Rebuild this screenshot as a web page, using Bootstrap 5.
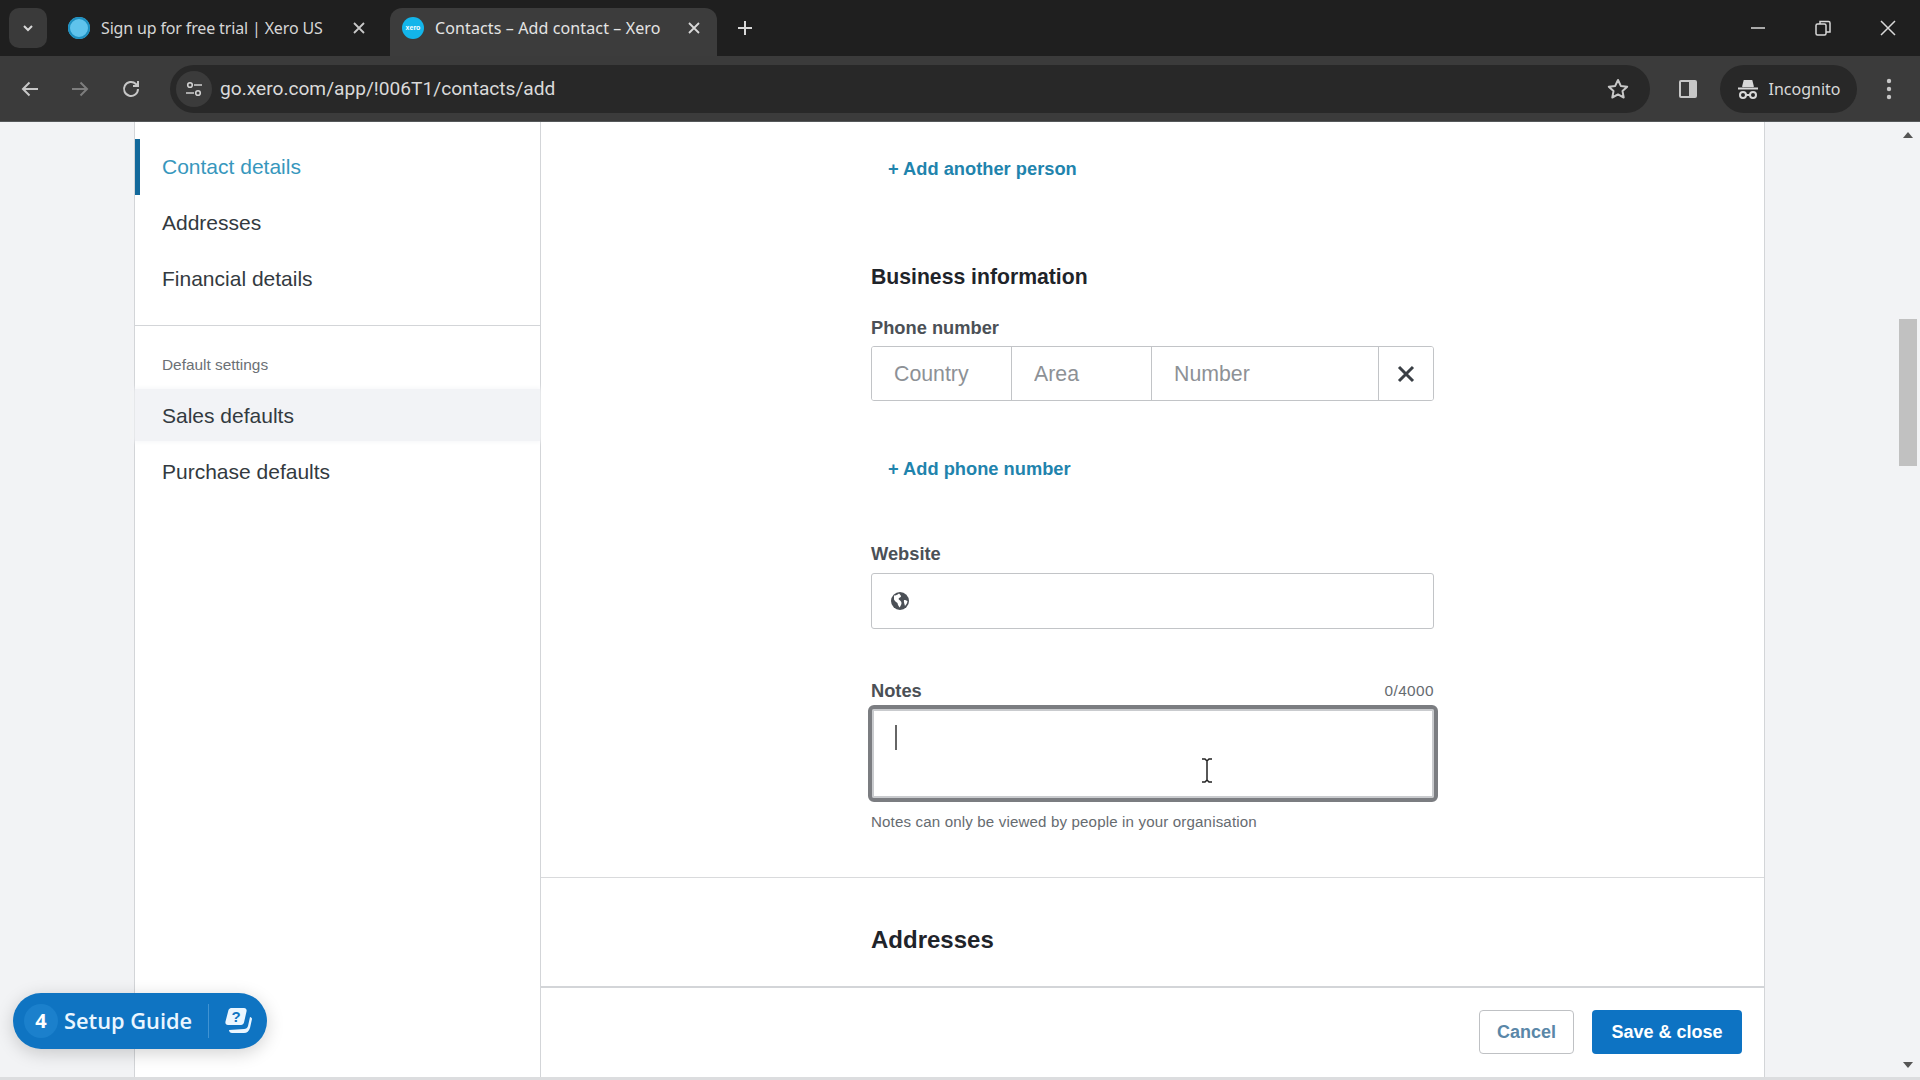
<!DOCTYPE html>
<html lang="en">
<head>
<meta charset="utf-8">
<title>Contacts – Add contact – Xero</title>
<link href="https://cdn.jsdelivr.net/npm/bootstrap@5.3.0/dist/css/bootstrap.min.css" rel="stylesheet">
<style>
html,body{height:100%;overflow:hidden}
body{font-family:"Liberation Sans",Arial,sans-serif;background:#f2f3f5;color:#2b3036}
.shell{height:1080px;width:1920px}
.tabstrip{height:56px;background:#1f1f1f;color:#d6d6d6;font-family:"Noto Sans",sans-serif;font-size:16px}
.tabmenu{width:38px;height:40px;margin:8px 0 0 9px;background:#3a3a3a;border-radius:10px}
.chrometab{height:48px;margin-top:8px;padding:0 16px 8px 12px;width:327px;border-radius:12px 12px 0 0}
.chrometab.current{background:#3c3c3c;color:#e4e4e4;padding-right:16px}
.chrometab.current .tabname{letter-spacing:.12px}
.chrometab.other{margin-left:9px;width:334px;padding-right:24px}
.favi{width:22px;height:22px;border-radius:50%;background:#13b5ea;flex:none;color:#fff;font-size:7px;font-weight:700;line-height:22px;text-align:center;font-family:"Liberation Sans",sans-serif}
.favi.blank{background:#5fc3ec;box-shadow:inset 0 0 0 2px #1d8fc0}
.tabname{flex:1;white-space:nowrap;overflow:hidden;margin-left:11px;letter-spacing:-.15px}
.plusslot{height:56px;margin-left:20px}
.winctrls{height:56px;gap:47px;padding-right:23px}
.toolbar{height:66px;background:#3b3b3b;padding:9px 0;color:#c7c7c7;border-bottom:1px solid #55585a}
.navgap{width:170px;flex:none;padding-left:20px;gap:30px}
.omnibox{flex:none;width:1480px;background:#282828;height:48px;border-radius:24px;padding:0 20px 0 6px;font-family:Roboto,sans-serif;font-size:19.15px;color:#dadada}
.urltext{padding-top:1px}
.sitechip{width:36px;height:36px;border-radius:50%;background:#3b3b3b;flex:none;margin-right:8px}
.panelicon{margin-left:28px;flex:none}
.profilechip{background:#282828;border-radius:24px;width:137px;height:48px;margin:0 29px 0 22px;flex:none;font-family:"Noto Sans",sans-serif;font-size:16px;color:#d8d8d8;gap:10px}
.workspace{height:958px}
.leftgutter{width:134px;flex:none;background:#f2f3f5}
.sidenav{width:407px;flex:none;background:#fff;border-left:1px solid #d3d5d8;border-right:1px solid #d3d5d8}
.sidelink{display:block;height:56px;line-height:56px;padding-left:27px;font-size:21px;color:#333a40;text-decoration:none}
.sidelink.chosen{color:#3797bd;border-left:5px solid #13699b;padding-left:22px}
.sidelink.hovered{background:#f2f3f6;height:52px;line-height:54px;margin-bottom:3px;box-shadow:0 0 5px 1px #f5f6f8}
.sidelabel{font-size:15.4px;color:#6b7075;padding:0 0 0 27px;line-height:20px;margin:29px 0 14px}
.sidelist{padding-top:17px;padding-bottom:18px;border-bottom:1px solid #d3d5d8}
.maincol{width:1224px;flex:none;background:#fff;border-right:1px solid #d3d5d8}
.scroller{flex:1;overflow:hidden}
.formcol{width:563px;margin-left:330px}
.addlink{display:block;font-weight:700;font-size:18.3px;color:#1f84ad;text-decoration:none;padding-left:17px;line-height:24px}
.sectiontitle{font-weight:700;font-size:21.2px;color:#1f242a;line-height:26px}
.fieldlabel{font-weight:700;font-size:18.3px;color:#4b5056;line-height:22px;margin:0}
.fieldbox{border:1.5px solid #c2c4c7;border-radius:3px}
.phonegroup{height:55px}
.phonegroup .form-control{border:0;border-right:1.5px solid #c2c4c7;border-radius:0;font-size:21.3px;color:#333;padding:1px 0 0 22px;height:100%;flex:none;box-shadow:none}
.phonegroup .form-control::placeholder{color:#8d9196}
.clearbtn{flex:1;background:#fff;border:0;padding:0}
.sitebox{height:56px;padding-left:18px;background:#fff}
.sitebox .form-control{border:0;height:100%;box-shadow:none}
.noteshead{margin-top:51px;margin-bottom:3px}
.notesbox{width:570px;margin-left:-3.5px;height:97px;border:4px solid #7b7d81;border-radius:6px;background:#fff;padding:2px;box-shadow:inset 0 0 0 2px #c9cbce;position:relative}
.counter{font-size:15.4px;color:#666b70;letter-spacing:.4px;line-height:22px}
.hintline{font-size:15.1px;color:#666b70;line-height:20px;letter-spacing:.15px;margin-top:10px}
.caretbar{position:absolute;left:23px;top:16px;width:2px;height:25px;background:#666}
.ibeam{position:absolute;left:329px;top:49px}
.rule{height:1px;background:#d9dadc;margin:45px 0 0}
.addrtitle{font-weight:700;font-size:24px;color:#1f242a;line-height:30px;margin:47px 0 0 330px}
.footerbar{height:94px;border-top:2px solid #d3d5d8;padding:0 22px 4px 0;gap:18px;background:#fff;flex:none}
.footerbar .btn{height:44px;font-weight:700;font-size:18px;padding:0;border-radius:4px}
.btn-cancel{width:95px;background:#fff;border:1.5px solid #bfc1c4;color:#5a87a8}
.btn-savex{width:150px;background:#0d73c3;border:0;color:#fff}
.rightgutter{flex:1;background:#f2f3f5}
.vscroll{width:21px;flex:none;background:#f2f3f5;position:relative}
.vthumb{width:18px;height:147px;background:#c1c1c1;margin-top:197px}
.arrowup{position:absolute;left:0;top:5px}
.arrowdown{position:absolute;left:0;bottom:6px}
.setupguide{position:absolute;left:13px;top:993px;width:254px;height:56px;border-radius:28px;background:#0f74c2;color:#eaf6ff;font-family:"Open Sans",sans-serif;font-size:21.8px;font-weight:600;box-shadow:0 4px 18px rgba(0,0,0,.18);z-index:5}
.guidecount{width:34px;height:34px;border-radius:50%;background:#1b80cc;font-weight:700;font-size:20px;line-height:34px;text-align:center;margin-left:11px;margin-right:6px;color:#fff;flex:none}
.guidesep{width:1px;height:34px;background:#3f93d3;margin:0 15px 0 16px}
.pagefoot{position:absolute;left:0;top:1077px;width:1920px;height:3px;background:#dcdddf}
</style>
</head>
<body>
<div class="shell d-flex flex-column position-relative">
  <div class="tabstrip d-flex align-items-start">
    <div class="tabmenu d-flex align-items-center justify-content-center">
      <svg width="14" height="14" viewBox="0 0 14 14" fill="none" stroke="#d8d8d8" stroke-width="2"><path d="M3 5l4 4 4-4"/></svg>
    </div>
    <div class="chrometab other d-flex align-items-center">
      <span class="favi blank"></span><span class="tabname">Sign up for free trial | Xero US</span>
      <svg width="14" height="14" viewBox="0 0 14 14" stroke="#c8c8c8" stroke-width="1.8"><path d="M2 2l10 10M12 2L2 12"/></svg>
    </div>
    <div class="chrometab current d-flex align-items-center">
      <span class="favi">xero</span><span class="tabname">Contacts – Add contact – Xero</span>
      <svg width="14" height="14" viewBox="0 0 14 14" stroke="#d8d8d8" stroke-width="1.8"><path d="M2 2l10 10M12 2L2 12"/></svg>
    </div>
    <div class="plusslot d-flex align-items-center">
      <svg width="16" height="16" viewBox="0 0 16 16" stroke="#d8d8d8" stroke-width="2"><path d="M8 1v14M1 8h14"/></svg>
    </div>
    <div class="winctrls d-flex align-items-center ms-auto">
      <svg width="18" height="18" viewBox="0 0 18 18" stroke="#d8d8d8" stroke-width="1.5"><path d="M2 9h14"/></svg>
      <svg width="18" height="18" viewBox="0 0 18 18" fill="none" stroke="#d8d8d8" stroke-width="1.5"><rect x="2" y="5" width="10" height="11" rx="1.5"/><path d="M6 5V2.5h8.5a1.5 1.5 0 0 1 1.5 1.500V13h-4"/></svg>
      <svg width="18" height="18" viewBox="0 0 18 18" stroke="#d8d8d8" stroke-width="1.5"><path d="M2 2l14 14M16 2L2 16"/></svg>
    </div>
  </div>
  <div class="toolbar d-flex align-items-center">
    <div class="navgap d-flex align-items-center">
      <svg width="20" height="20" viewBox="0 0 20 20" fill="none" stroke="#c7c7c7" stroke-width="2"><path d="M18 10H3M9.500 3.500 3 10l6.500 6.500"/></svg>
      <svg width="20" height="20" viewBox="0 0 20 20" fill="none" stroke="#7d7d7d" stroke-width="2"><path d="M2 10h15M10.500 3.500 17 10l-6.500 6.500"/></svg>
      <svg width="22" height="22" viewBox="0 0 22 22" fill="none" stroke="#c7c7c7" stroke-width="2"><path d="M18 11a7 7 0 1 1-2.100-5L18 8M18 3v5h-5"/></svg>
    </div>
    <div class="omnibox d-flex align-items-center">
      <span class="sitechip d-flex align-items-center justify-content-center">
        <svg width="20" height="20" viewBox="0 0 20 20" fill="none" stroke="#d0d0d0" stroke-width="1.600"><circle cx="6" cy="6" r="2.300"/><path d="M10 6h8M2 14h8"/><circle cx="14" cy="14" r="2.300"/></svg>
      </span>
      <span class="urltext">go.xero.com/app/!006T1/contacts/add</span>
      <svg class="ms-auto" width="24" height="24" viewBox="0 0 24 24" fill="none" stroke="#c7c7c7" stroke-width="2" stroke-linejoin="round"><path d="M12 3l2.800 5.900 6.400.8-4.700 4.400 1.200 6.400L12 17.400l-5.700 3.100 1.200-6.400-4.700-4.400 6.400-.8z"/></svg>
    </div>
    <svg class="panelicon" width="20" height="20" viewBox="0 0 20 20"><rect x="1" y="1" width="18" height="18" rx="2" fill="#c7c7c7"/><rect x="3" y="3" width="8" height="14" fill="#3b3b3b"/></svg>
    <div class="profilechip d-flex align-items-center justify-content-center">
      <svg width="22" height="22" viewBox="0 0 22 22" fill="none" stroke="#d8d8d8" stroke-width="2"><path d="M6 9l1.500-6h7L16 9" fill="#d8d8d8"/><path d="M1 10.500h20"/><circle cx="6" cy="17" r="3"/><circle cx="16" cy="17" r="3"/><path d="M9 17h4"/></svg>
      <span>Incognito</span>
    </div>
    <svg width="6" height="22" viewBox="0 0 6 22" fill="#c7c7c7"><circle cx="3" cy="3" r="2.200"/><circle cx="3" cy="11" r="2.200"/><circle cx="3" cy="19" r="2.200"/></svg>
  </div>
  <div class="workspace d-flex">
    <div class="leftgutter"></div>
    <nav class="sidenav">
      <div class="sidelist">
        <a class="sidelink chosen" href="#">Contact details</a>
        <a class="sidelink" href="#">Addresses</a>
        <a class="sidelink" href="#">Financial details</a>
      </div>
      <div class="sidelabel">Default settings</div>
      <a class="sidelink hovered" href="#">Sales defaults</a>
      <a class="sidelink" href="#">Purchase defaults</a>
    </nav>
    <main class="maincol d-flex flex-column">
      <div class="scroller">
        <div class="formcol">
          <a class="addlink" href="#" style="margin-top:35px">+ Add another person</a>
          <h2 class="sectiontitle" style="margin:83px 0 0">Business information</h2>
          <label class="fieldlabel d-block" style="margin-top:27px;margin-bottom:7px">Phone number</label>
          <div class="fieldbox phonegroup d-flex overflow-hidden">
            <input class="form-control" style="width:140px" placeholder="Country">
            <input class="form-control" style="width:140px" placeholder="Area">
            <input class="form-control" style="width:227px" placeholder="Number">
            <button class="clearbtn d-flex align-items-center justify-content-center" type="button" aria-label="Remove">
              <svg width="18" height="18" viewBox="0 0 18 18" stroke="#3a3f45" stroke-width="3"><path d="M2 2l14 14M16 2L2 16"/></svg>
            </button>
          </div>
          <a class="addlink" href="#" style="margin-top:56px">+ Add phone number</a>
          <label class="fieldlabel d-block" style="margin-top:62px;margin-bottom:8px">Website</label>
          <div class="fieldbox sitebox d-flex align-items-center">
            <svg width="20" height="20" viewBox="0 0 20 20" class="flex-shrink-0"><circle cx="10" cy="10" r="9" fill="#4b5056"/><path d="M4 4.500c2 0 3-.5 5-2 1 1 2 2 2 3s-2 1-2.500 2.500c1 1.500 3 2 3 4 0 1.500-1 3-2 4.500-.5-1.500-2-2.500-2-4.500-1.500-1-2.800-2-3.500-3.500z" fill="#fff"/><path d="M14 9c1.500 0 2.500.5 3.500 1-.3 2-1 3.500-2.500 5-.5-2-1.500-4-1-6z" fill="#fff"/></svg>
            <input class="form-control" aria-label="Website">
          </div>
          <div class="noteshead d-flex justify-content-between align-items-center">
            <label class="fieldlabel">Notes</label><span class="counter">0/4000</span>
          </div>
          <div class="notesbox">
            <span class="caretbar"></span>
            <svg class="ibeam" width="12" height="25" viewBox="0 0 12 25" fill="none" stroke="#222" stroke-width="1.500"><path d="M1 1h3l2 2 2-2h3M6 3v19M1 24h3l2-2 2 2h3"/></svg>
          </div>
          <div class="hintline">Notes can only be viewed by people in your organisation</div>
        </div>
        <div class="rule"></div>
        <h2 class="addrtitle">Addresses</h2>
      </div>
      <div class="footerbar d-flex align-items-center justify-content-end">
        <button class="btn btn-cancel" type="button">Cancel</button>
        <button class="btn btn-savex" type="button">Save &amp; close</button>
      </div>
    </main>
    <div class="rightgutter"></div>
    <div class="vscroll">
      <svg class="arrowup" width="18" height="20" viewBox="0 0 18 20" fill="#555"><path d="M9 5l5 6H4z"/></svg>
      <div class="vthumb"></div>
      <svg class="arrowdown" width="18" height="20" viewBox="0 0 18 20" fill="#555"><path d="M9 14l5-6H4z"/></svg>
    </div>
  </div>
  <div class="pagefoot"></div>
  <div class="setupguide d-flex align-items-center">
    <span class="guidecount">4</span><span>Setup Guide</span><span class="guidesep"></span>
    <svg width="30" height="30" viewBox="0 0 30 30"><path d="M5 24c0 2 1.500 3 3 3h12c3 0 5-2 6-5l2-9c0-1-1-2-2-2l-2 9c-.5 2-2 3-4 3z" fill="#eaf6ff"/><path d="M7 2h13c2 0 3 1.500 2.500 3.500l-2.500 11c-.5 1.500-1.500 2.500-3 2.500H4c-2 0-3-1.500-2.500-3.500L4.500 4C5 3 6 2 7 2z" fill="#eaf6ff"/><text x="12" y="16" text-anchor="middle" font-family="Liberation Sans" font-weight="700" font-size="15" fill="#0f74c2">?</text></svg>
  </div>
</div>
</body>
</html>
